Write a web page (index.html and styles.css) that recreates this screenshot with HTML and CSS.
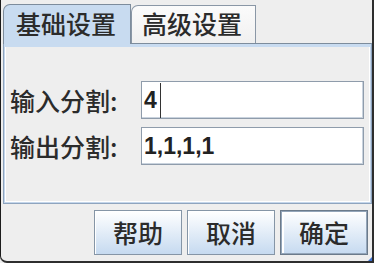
FILE: index.html
```html
<!DOCTYPE html>
<html lang="zh-CN">
<head>
    <meta charset="UTF-8">
    <title>分割设置</title>
    <link rel="stylesheet" href="styles.css">
</head>
<body>
<div class="frame">
    <div class="tabs">
        <div class="tab tab_on">基础设置</div>
        <div class="tab">高级设置</div>
    </div>
    <div class="panel">
        <div class="row">
            <span class="label">输入分割:</span>
            <div class="field">4<span class="caret"></span></div>
        </div>
        <div class="row">
            <span class="label">输出分割:</span>
            <div class="field">1,1,1,1</div>
        </div>
    </div>
    <div class="btns">
        <div class="btn">帮助</div>
        <div class="btn">取消</div>
        <div class="btn btn_focus">确定</div>
    </div>
    <span class="grip"></span>
</div>
</body>
</html>
```

FILE: styles.css
```css
html, body {
    margin: 0px;
    background-color: #eeeeee;
    font-family: "Noto Sans CJK SC", "Liberation Sans", sans-serif;
}

.frame {
    position: relative;
    width: 374px;
    height: 263px;
    box-sizing: border-box;
    padding: 4px 0 0 2px;
    background-color: #eeeeee;
    border-left: 1px solid #1c1c1c;
    border-right: 2px solid #2e2e2e;
    border-bottom: 2px solid #2e2e2e;
    border-bottom-left-radius: 7px;
}

.tabs {
    display: flex;
    align-items: flex-end;
    height: 39px;
}

.tab {
    box-sizing: border-box;
    height: 38px;
    width: 125px;
    padding-left: 10px;
    font-size: 25px;
    font-weight: 500;
    line-height: 34px;
    color: #2b2b2b;
    background: linear-gradient(#fbfbfb, #f0f0f0);
    border: 1px solid #8a97a6;
    border-bottom: none;
    border-top-left-radius: 7px;
}

.tab_on {
    position: relative;
    z-index: 1;
    width: 128px;
    height: 40px;
    margin-bottom: -1px;
    padding-left: 12px;
    line-height: 36px;
    background: #c8dbf0;
    border-color: #7d8c9c;
}

.panel {
    box-sizing: border-box;
    height: 161px;
    padding: 37px 7px 0 5px;
    border: 1px solid #8ea4be;
    border-top-color: #7d8c9c;
    box-shadow: inset 0 3px 0 #c8dbf0, inset 0 0 0 1px #c4d6eb, inset 0 0 0 2px #ffffff;
}

.row {
    display: grid;
    grid-template-columns: 132px 1fr;
    align-items: center;
    margin-bottom: 8px;
}

.label {
    font-size: 25px;
    font-weight: 500;
    color: #2b2b2b;
    padding-left: 1px;
}

.field {
    display: flex;
    align-items: center;
    box-sizing: border-box;
    height: 38px;
    padding-left: 2px;
    background-color: #fff;
    border: 1px solid #8f9cab;
    box-shadow: inset -1px -1px 0 #c9d3de;
    font-family: "Liberation Sans", sans-serif;
    font-weight: bold;
    font-size: 23px;
    color: #222222;
}

.caret {
    display: inline-block;
    width: 1px;
    height: 35px;
    margin-left: 3px;
    background-color: #333333;
}

.btns {
    display: flex;
    justify-content: flex-end;
    gap: 5px;
    padding: 6px 4px 0 0;
}

.btn {
    box-sizing: border-box;
    width: 88px;
    height: 45px;
    text-align: center;
    font-size: 25px;
    font-weight: 500;
    line-height: 42px;
    color: #2b2b2b;
    background: linear-gradient(#ffffff, #c6daf0);
    border: 1px solid #8595a6;
    box-shadow: inset 1px 1px 0 #ffffff;
}

.btn_focus {
    border-color: #6b7a8a;
    box-shadow: inset 0 0 0 1px #93a5b9, inset 1px 1px 0 2px #ffffff;
}

.grip {
    position: absolute;
    right: 0;
    bottom: 0;
    width: 0;
    height: 0;
    border-left: 4px solid transparent;
    border-bottom: 4px solid #3a6fd0;
}
```
